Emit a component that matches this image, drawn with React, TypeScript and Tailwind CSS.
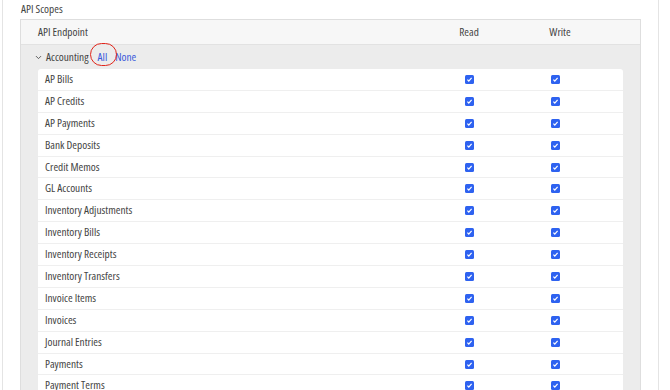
import { ChevronDown } from "lucide-react";

const endpoints = [
  "AP Bills",
  "AP Credits",
  "AP Payments",
  "Bank Deposits",
  "Credit Memos",
  "GL Accounts",
  "Inventory Adjustments",
  "Inventory Bills",
  "Inventory Receipts",
  "Inventory Transfers",
  "Invoice Items",
  "Invoices",
  "Journal Entries",
  "Payments",
  "Payment Terms",
  "Purchase Orders",
];

const Check = () => (
  <span className="flex size-[9px] items-center justify-center rounded-[1.5px] bg-[#2e62f0]">
    <svg viewBox="0 0 10 10" className="size-[7px]">
      <path d="M2 5.2 L4 7.2 L8 2.6" fill="none" stroke="white" strokeWidth="1.7" />
    </svg>
  </span>
);

export default function App() {
  return (
    <div className="h-[390px] w-[670px] overflow-hidden bg-white font-['Open_Sans',sans-serif] text-[11.3px] text-[#444] [font-stretch:80%]">
      <div className="ml-[2px] mr-[11px] h-full border-x border-[#e4e4e4]">
        <div className="pl-[18px] pt-[1px] leading-[16px]">API Scopes</div>
        <div className="ml-[17px] mr-[17px] mt-[2px] border border-[#dedede] bg-[#ececec]">
          <div className="flex h-[25px] items-center border-b border-[#e2e2e2] bg-[#f7f7f7] pl-[17px]">
            <span className="flex-1">API Endpoint</span>
            <span className="w-[80px] text-center">Read</span>
            <span className="ml-[11px] w-[80px] text-center">Write</span>
            <span className="w-[40px]" />
          </div>
          <div className="flex h-[24px] items-center pl-[13px]">
            <ChevronDown className="mr-[3px] size-[9px] text-[#555]" strokeWidth={2.5} />
            <span>Accounting</span>
            <span className="relative ml-[9px] text-[#3b5bdb]">
              All
              <span className="absolute left-[-8px] top-[-6px] h-[23px] w-[27px] rounded-full border-[1.5px] border-[#e0251b]" />
            </span>
            <span className="ml-[8px] text-[#3b5bdb]">None</span>
          </div>
          <div className="mx-[17px] rounded-t-[3px] bg-white">
            {endpoints.map((name) => (
              <div
                key={name}
                className="flex h-[21.9px] items-center border-b border-[#efefef] pl-[7px]"
              >
                <span className="flex-1">{name}</span>
                <span className="flex w-[80px] justify-center">
                  <Check />
                </span>
                <span className="ml-[6px] flex w-[80px] justify-center">
                  <Check />
                </span>
                <span className="w-[28px]" />
              </div>
            ))}
          </div>
        </div>
      </div>
    </div>
  );
}
